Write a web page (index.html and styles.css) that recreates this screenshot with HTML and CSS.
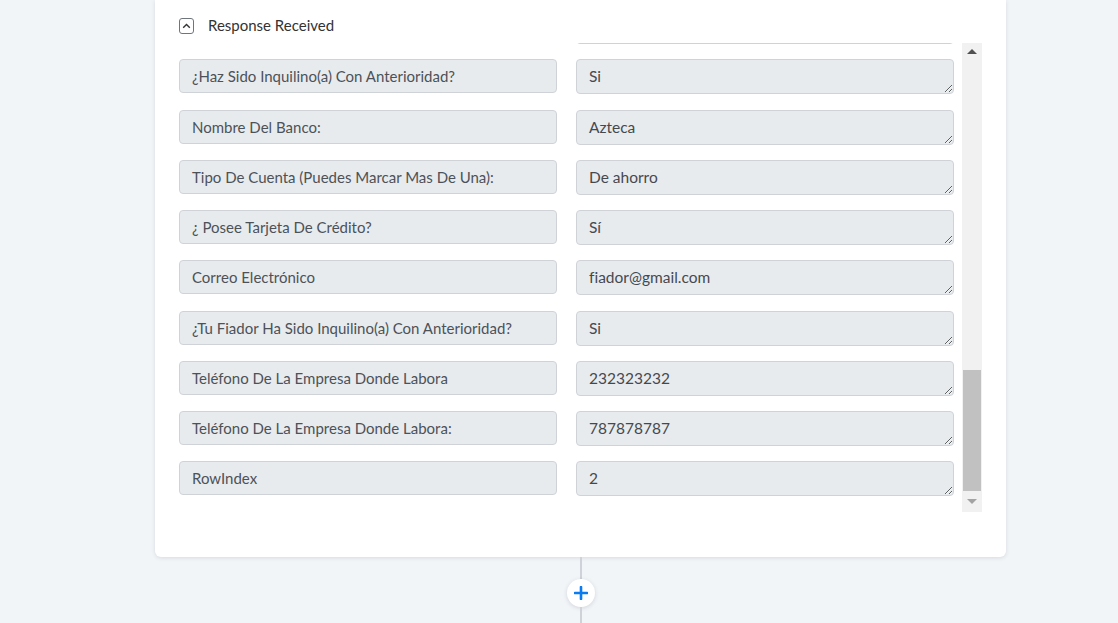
FILE: index.html
```html
<!DOCTYPE html>
<html lang="es">
<head>
<meta charset="utf-8">
<title>Response Received</title>
<link rel="stylesheet" href="styles.css">
</head>
<body>
<div class="page">
  <section class="card">
    <header class="card-head">
      <span class="toggle">
        <svg width="9" height="6" viewBox="0 0 9 6"><path d="M1.2 4.8 L4.5 1.6 L7.8 4.8" fill="none" stroke="#333" stroke-width="1.4"/></svg>
      </span>
      <span class="title">Response Received</span>
    </header>
    <div class="list">
      <div class="rows">
        <div class="label ghost"></div>
        <textarea class="value" readonly></textarea>

        <div class="label">¿Haz Sido Inquilino(a) Con Anterioridad?</div>
        <textarea class="value" readonly>Si</textarea>

        <div class="label">Nombre Del Banco:</div>
        <textarea class="value" readonly>Azteca</textarea>

        <div class="label">Tipo De Cuenta (Puedes Marcar Mas De Una):</div>
        <textarea class="value" readonly>De ahorro</textarea>

        <div class="label">¿ Posee Tarjeta De Crédito?</div>
        <textarea class="value" readonly>Sí</textarea>

        <div class="label">Correo Electrónico</div>
        <textarea class="value" readonly>fiador@gmail.com</textarea>

        <div class="label">¿Tu Fiador Ha Sido Inquilino(a) Con Anterioridad?</div>
        <textarea class="value" readonly>Si</textarea>

        <div class="label">Teléfono De La Empresa Donde Labora</div>
        <textarea class="value" readonly>232323232</textarea>

        <div class="label">Teléfono De La Empresa Donde Labora:</div>
        <textarea class="value" readonly>787878787</textarea>

        <div class="label">RowIndex</div>
        <textarea class="value" readonly>2</textarea>
      </div>
      <div class="scrollbar">
        <div class="sb-btn"><span class="arrow-up"></span></div>
        <div class="sb-track"><div class="sb-thumb"></div></div>
        <div class="sb-btn down"><span class="arrow-down"></span></div>
      </div>
    </div>
  </section>
  <div class="connector">
    <div class="line top"></div>
    <button class="add" type="button" aria-label="Add step">
      <svg width="14" height="14" viewBox="0 0 14 14"><path d="M7 1 V13 M1 7 H13" stroke="#0b7bf0" stroke-width="2.6" stroke-linecap="round"/></svg>
    </button>
    <div class="line bottom"></div>
  </div>
</div>
</body>
</html>
```

FILE: styles.css
```css
html, body {
  margin: 0;
  padding: 0;
}
body {
  background: #f2f5f8;
  height: 623px;
  overflow: hidden;
  font-family: Lato, "Open Sans", "Liberation Sans", sans-serif;
  font-variant-ligatures: none;
}
.page {
  padding-left: 155px;
  width: 851px;
  display: flex;
  flex-direction: column;
}
.card {
  background: #fff;
  border-radius: 0 0 6px 6px;
  box-shadow: 0 1px 4px rgba(20, 30, 50, 0.12);
  padding: 17px 24px 45px 24px;
}
.card-head {
  display: flex;
  align-items: center;
  height: 17px;
}
.toggle {
  width: 13px;
  height: 14px;
  border: 1px solid #6f757c;
  border-radius: 3px;
  display: flex;
  align-items: center;
  justify-content: center;
  box-sizing: content-box;
}
.title {
  margin-left: 14px;
  font-size: 15px;
  color: #333;
  margin-top: -1px;
}
.list {
  margin-top: 9px;
  height: 469px;
  display: flex;
  overflow: hidden;
}
.rows {
  width: 775px;
  display: grid;
  grid-template-columns: 378px 378px;
  column-gap: 19px;
  row-gap: 15.25px;
  grid-auto-rows: 35px;
  margin-top: -34px;
  align-content: start;
}
.label {
  height: 34px;
  box-sizing: border-box;
  background: #e8ebee;
  border: 1px solid #cfd3d8;
  border-radius: 4px;
  padding: 0 12px;
  line-height: 32px;
  font-size: 15px;
  color: #4c5258;
  white-space: nowrap;
}
.label.ghost {
  visibility: hidden;
}
.value {
  display: block;
  width: 378px;
  height: 35px;
  box-sizing: border-box;
  margin: 0;
  background: #e8ebee;
  border: 1px solid #cfd3d8;
  border-radius: 4px;
  padding: 6px 12px;
  font-family: Lato, "Open Sans", "Liberation Sans", sans-serif;
  font-variant-ligatures: none;
  font-size: 15.5px;
  line-height: 20px;
  color: #45494e;
  resize: vertical;
  overflow: hidden;
  outline: none;
}
.scrollbar {
  margin-left: 8px;
  width: 20px;
  background: #f1f1f1;
  display: flex;
  flex-direction: column;
}
.sb-btn {
  height: 17px;
  display: flex;
  align-items: center;
  justify-content: center;
}
.sb-btn.down {
  padding-bottom: 4px;
  box-sizing: border-box;
}
.arrow-up {
  width: 0;
  height: 0;
  border-left: 5px solid transparent;
  border-right: 5px solid transparent;
  border-bottom: 5px solid #505050;
}
.arrow-down {
  width: 0;
  height: 0;
  border-left: 5px solid transparent;
  border-right: 5px solid transparent;
  border-top: 5px solid #a3a3a3;
}
.sb-track {
  flex: 1;
  display: flex;
  flex-direction: column;
  justify-content: flex-end;
  padding: 0 1px 4px 1px;
}
.sb-thumb {
  height: 121px;
  background: #c1c1c1;
}
.connector {
  display: flex;
  flex-direction: column;
  align-items: center;
  width: 851px;
}
.line {
  width: 2px;
  background: #cfd3d8;
}
.line.top {
  height: 22px;
}
.line.bottom {
  height: 40px;
}
.add {
  width: 28px;
  height: 28px;
  border-radius: 50%;
  border: none;
  padding: 0;
  background: #fff;
  box-shadow: 0 1px 4px rgba(20, 30, 50, 0.15);
  display: flex;
  align-items: center;
  justify-content: center;
}
```
